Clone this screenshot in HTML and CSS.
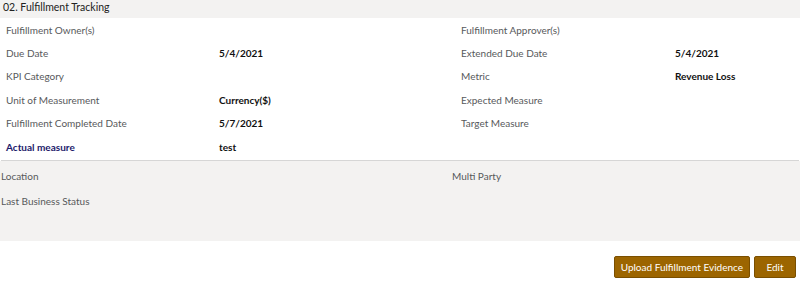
FILE: index.html
```html
<!DOCTYPE html>
<html lang="en">
<head>
    <meta charset="UTF-8">
    <title>Fulfillment Tracking</title>
    <link rel="stylesheet" href="styles.css">
</head>
<body>
    <div class="section-header">02. Fulfillment Tracking</div>
    <div class="details">
        <div class="label">Fulfillment Owner(s)</div>
        <div class="value"></div>
        <div class="label">Fulfillment Approver(s)</div>
        <div class="value"></div>

        <div class="label">Due Date</div>
        <div class="value">5/4/2021</div>
        <div class="label">Extended Due Date</div>
        <div class="value">5/4/2021</div>

        <div class="label">KPI Category</div>
        <div class="value"></div>
        <div class="label">Metric</div>
        <div class="value">Revenue Loss</div>

        <div class="label">Unit of Measurement</div>
        <div class="value">Currency($)</div>
        <div class="label">Expected Measure</div>
        <div class="value"></div>

        <div class="label">Fulfillment Completed Date</div>
        <div class="value">5/7/2021</div>
        <div class="label">Target Measure</div>
        <div class="value"></div>

        <div class="label label-strong">Actual measure</div>
        <div class="value">test</div>
        <div class="label"></div>
        <div class="value"></div>
    </div>
    <div class="extra">
        <div class="label">Location</div>
        <div class="label">Multi Party</div>
        <div class="label">Last Business Status</div>
        <div class="label"></div>
    </div>
    <div class="actions">
        <button class="btn">Upload Fulfillment Evidence</button>
        <button class="btn btn-small">Edit</button>
    </div>
</body>
</html>
```

FILE: styles.css
```css
body {
    margin: 0;
    font-family: Lato, "Open Sans", sans-serif;
    font-size: 10px;
    color: #333;
    background-color: #fff;
}
.section-header {
    height: 18px;
    line-height: 15px;
    padding-left: 3px;
    font-size: 10.5px;
    color: #222;
    background-color: #f3f2f1;
}
.details {
    display: grid;
    grid-template-columns: 213px 242px 214px 1fr;
    grid-auto-rows: 23.4px;
    align-items: center;
    margin: 0 1px;
    padding: 0 0 2px 5px;
    background-color: #fff;
    border-bottom: 1px solid #d6d6d6;
}
.label {
    color: #57595b;
}
.label-strong {
    color: #1c1a6b;
    font-weight: 700;
}
.value {
    color: #111;
    font-weight: 700;
}
.extra {
    display: grid;
    grid-template-columns: 451px 1fr;
    grid-auto-rows: 25px;
    align-items: center;
    height: 78px;
    padding: 2px 0 0 1px;
    background-color: #f3f2f1;
}
.actions {
    display: flex;
    justify-content: flex-end;
    gap: 4px;
    padding: 15px 4px 0 0;
}
.btn {
    height: 22px;
    padding: 0 6px;
    font-family: inherit;
    font-size: 10px;
    color: #fff;
    background-color: #9c6500;
    border: 1px solid #7a4f00;
    border-radius: 2px;
    cursor: pointer;
}
.btn-small {
    min-width: 42px;
}
.btn:hover {
    background-color: #85560a;
}
```
